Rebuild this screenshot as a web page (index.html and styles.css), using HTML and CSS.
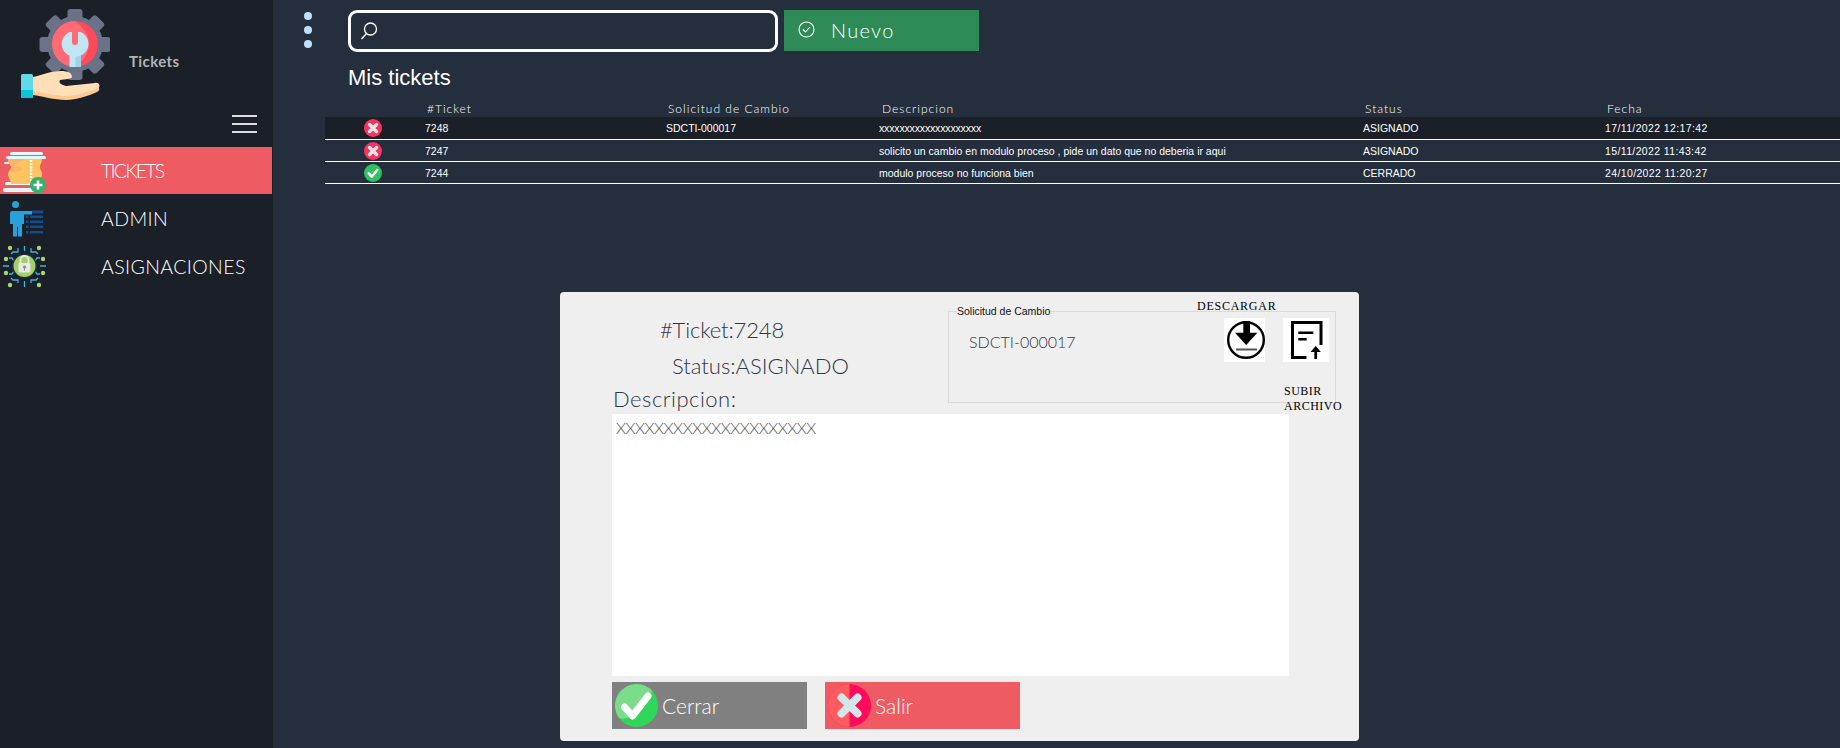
FILE: index.html
```html
<!DOCTYPE html>
<html lang="es">
<head>
<meta charset="utf-8">
<title>Tickets</title>
<link rel="stylesheet" href="styles.css">
</head>
<body>
<div class="app">
  <aside class="sidebar">
    <div class="brand">
      <svg class="logo" width="92" height="108" viewBox="18 0 92 108">
        <g fill="#6b7186">
          <circle cx="75" cy="44" r="28"/>
          <rect x="67.500" y="9" width="15" height="71" rx="3"/>
          <rect x="67.500" y="9" width="15" height="71" rx="3" transform="rotate(45 75 44.500)"/>
          <rect x="67.500" y="9" width="15" height="71" rx="3" transform="rotate(90 75 44.500)"/>
          <rect x="67.500" y="9" width="15" height="71" rx="3" transform="rotate(135 75 44.500)"/>
        </g>
        <circle cx="75" cy="44" r="23" fill="#ff4a5c"/>
        <path d="M75 21a23 23 0 0 0 0 46c8-6 14-14 14-23s-6-17-14-23z" fill="#ff6b75"/>
        <path d="M69.500 67V55.500C64.500 53.500 61.800 49 61.800 44C61.800 38.500 65 34 70 32L72 32V42A3 3 0 0 0 78 42V32L80.500 32C85.500 34 88.500 38.500 88.500 44C88.500 49 85.500 53.500 81 55.500V67Z" fill="#bfe6f2"/>
        <path d="M75.500 67H81V55.500L75.500 57z" fill="#9fd3e6"/>
        <path d="M33 77c9-2 18-6 28-6 7 0 11 2 11 6 0 2-7 2-12 3-2 3 2 5 6 6l29-3c4-1 6 3 3 6-9 4-22 10-32 10-12 0-24-4-33-5z" fill="#ffdfb8"/>
        <path d="M33 91c9 1 21 5 33 5 10 0 24-5 33-8 1 1 0 3-2 4-9 4-21 8-31 8-12 0-24-4-33-5z" fill="#fdc98e"/>
        <rect x="21" y="74" width="12" height="24" rx="1.500" fill="#62d9ea"/>
        <path d="M21 90h12v6.500a1.500 1.500 0 0 1-1.500 1.500h-9a1.500 1.500 0 0 1-1.500-1.500z" fill="#0cc4dc"/>
      </svg>
      <span class="brand-name">Tickets</span>
    </div>
    <div class="burger-row">
      <div class="burger"><i></i><i></i><i></i></div>
    </div>
    <nav class="nav">
      <a class="nav-item active">
        <svg class="nav-icon" width="48" height="47" viewBox="0 147 48 47">
          <g fill="#e2f8fd">
            <rect x="10" y="152" width="33" height="3" rx="1.500"/>
            <rect x="6" y="156" width="40" height="3" rx="1.500"/>
            <rect x="4" y="162" width="10" height="2" rx="1"/>
            <rect x="5" y="182" width="34" height="3" rx="1.500"/>
            <rect x="3" y="188" width="36" height="4" rx="2"/>
          </g>
          <path d="M8 159h34c0 4-2 5-2 8s2 4 2 7-2 5-2 10H11c0-4-3-6-3-10 0-3 3-4 3-7s-3-4-3-8z" fill="#fdc45f"/>
          <path d="M8 159h16c-2 3-8 3-10 6 3 2 8 1 9 4-2 3-8 3-12 3 0-2 0-3 0-5s-3-4-3-8z" fill="#fbb56b"/>
          <path d="M31 160v24" stroke="#fff" stroke-width="2.500" stroke-dasharray="2 1.200"/>
          <circle cx="38" cy="185" r="8" fill="#30b36f"/>
          <path d="M38 180.500v9M33.500 185h9" stroke="#fff" stroke-width="2.600"/>
        </svg>
        <span class="label-tickets">TICKETS</span>
      </a>
      <a class="nav-item">
        <svg class="nav-icon" width="48" height="48" viewBox="0 195 48 48">
          <path d="M10 214a2 2 0 0 1 2-2h20v3.500H24V225h-2v12.500h-4V228h-1v9.500h-4V225h-3z" fill="#2a9fde"/>
          <circle cx="15.500" cy="205.500" r="3.500" fill="#2a9fde"/>
          <g fill="#0f4f8f">
            <rect x="32" y="211.500" width="11" height="3"/>
            <rect x="30" y="216.500" width="13" height="2.500"/>
            <rect x="30" y="221.500" width="13" height="2.500"/>
            <rect x="30" y="226.500" width="13" height="2.500"/>
            <rect x="30" y="232" width="13" height="2.500"/>
            <rect x="26" y="216.500" width="2.500" height="2.500"/>
            <rect x="26" y="221.500" width="2.500" height="2.500"/>
            <rect x="26" y="226.500" width="2.500" height="2.500"/>
            <rect x="26" y="232" width="2.500" height="2.500"/>
          </g>
        </svg>
        <span>ADMIN</span>
      </a>
      <a class="nav-item">
        <svg class="nav-icon" width="48" height="48" viewBox="0 243 48 48">
          <g fill="none" stroke="#3fb2e0" stroke-width="1.300">
            <path d="M24.500 247v5M18 249v4h-5l-2 2M31 249v4h5l2 2M3 267h6M40 267h6M9 259h3l2 3M40 259h-3l-2 3M9 275h3l2-3M40 275h-3l-2-3M24.500 282v6M18 284v-3h-5l-2-2M31 284v-3h5l2-2"/>
          </g>
          <g fill="#a8d66c">
            <circle cx="10" cy="249" r="2.200"/><circle cx="39" cy="249" r="2.200"/>
            <circle cx="6" cy="260" r="2.200"/><circle cx="43" cy="260" r="2.200"/>
            <circle cx="6" cy="274" r="2.200"/><circle cx="43" cy="274" r="2.200"/>
            <circle cx="10" cy="286" r="2.200"/><circle cx="39" cy="286" r="2.200"/>
          </g>
          <circle cx="24.500" cy="267" r="12.500" fill="#16323a"/>
          <circle cx="24.500" cy="267" r="11" fill="#a2d168"/>
          <path d="M20.500 264v-3a4 4 0 0 1 8 0v3" fill="none" stroke="#e6e6e6" stroke-width="1.800"/>
          <rect x="18.500" y="264" width="12" height="9.500" rx="1" fill="#e8e8e8"/>
          <circle cx="24.500" cy="268" r="1.500" fill="#8a8a8a"/>
          <rect x="24" y="268" width="1" height="3.500" fill="#8a8a8a"/>
        </svg>
        <span>ASIGNACIONES</span>
      </a>
    </nav>
  </aside>

  <main class="main">
    <div class="topbar">
      <div class="dots"><i></i><i></i><i></i></div>
      <div class="search">
        <svg width="18" height="18" viewBox="0 0 18 18" fill="none" stroke="#fff" stroke-width="1.300">
          <circle cx="10.500" cy="7" r="6"/>
          <path d="M6.500 11.500l-5 5.500"/>
        </svg>
      </div>
      <button class="btn-new">
        <svg width="17" height="17" viewBox="0 0 17 17" fill="none" stroke="#fff" stroke-width="1.100">
          <circle cx="8.500" cy="8.500" r="7.500"/>
          <path d="M5 8.500l2.500 2.500 4.500-5"/>
        </svg>
        <span>Nuevo</span>
      </button>
    </div>
    <h1 class="title">Mis tickets</h1>
    <table class="grid">
      <colgroup>
        <col class="c1"><col class="c2"><col class="c3"><col class="c4"><col class="c5"><col class="c6">
      </colgroup>
      <thead>
        <tr><th></th><th>#Ticket</th><th>Solicitud de Cambio</th><th class="th-desc">Descripcion</th><th>Status</th><th>Fecha</th></tr>
      </thead>
      <tbody>
        <tr class="selected">
          <td class="state"><svg class="st" width="18" height="18" viewBox="0 0 18 18"><circle cx="9" cy="9" r="9" fill="#f9325f"/><path d="M5.500 5.500l7 7M12.500 5.500l-7 7" stroke="#e6e6e6" stroke-width="3.400" stroke-linecap="round"/></svg></td>
          <td>7248</td><td>SDCTI-000017</td><td class="xs">xxxxxxxxxxxxxxxxxxxx</td><td>ASIGNADO</td><td class="date">17/11/2022 12:17:42</td>
        </tr>
        <tr>
          <td class="state"><svg class="st" width="18" height="18" viewBox="0 0 18 18"><circle cx="9" cy="9" r="9" fill="#f9325f"/><path d="M5.500 5.500l7 7M12.500 5.500l-7 7" stroke="#e6e6e6" stroke-width="3.400" stroke-linecap="round"/></svg></td>
          <td>7247</td><td></td><td>solicito un cambio en modulo proceso , pide un dato que no deberia ir aqui</td><td>ASIGNADO</td><td class="date">15/11/2022 11:43:42</td>
        </tr>
        <tr>
          <td class="state"><svg class="st" width="18" height="18" viewBox="0 0 18 18"><circle cx="9" cy="9" r="9" fill="#33c062"/><path d="M4.800 9.500l3 3 5.500-6.500" fill="none" stroke="#fff" stroke-width="2.600" stroke-linecap="round" stroke-linejoin="round"/></svg></td>
          <td>7244</td><td></td><td>modulo proceso no funciona bien</td><td>CERRADO</td><td class="date">24/10/2022 11:20:27</td>
        </tr>
      </tbody>
    </table>
  </main>

  <section class="modal">
    <div class="modal-top">
      <div class="info">
        <div class="info-ticket">#Ticket:7248</div>
        <div class="info-status">Status:ASIGNADO</div>
        <div class="info-desc">Descripcion:</div>
      </div>
      <fieldset class="change">
        <legend>Solicitud de Cambio</legend>
        <div class="change-value">SDCTI-000017</div>
      </fieldset>
      <div class="tools">
        <div class="tool-download">
          <div class="tool-label">DESCARGAR</div>
          <div class="tool-box tb-a">
            <svg width="41" height="44" viewBox="0 0 41 44">
              <circle cx="22" cy="22" r="17.800" fill="none" stroke="#000" stroke-width="2.400"/>
              <path d="M19.300 3h6.700v11.700h7.300L22.200 27 11 14.700h8.300z" fill="#000"/>
              <rect x="12" y="30.500" width="21" height="2" fill="#555"/>
            </svg>
          </div>
        </div>
        <div class="tool-upload">
          <div class="tool-box tb-b">
            <svg width="46" height="44" viewBox="0 0 46 44" fill="none" stroke="#000" stroke-width="3">
              <path d="M38 27V4.500H9.500V39.500h14"/>
              <path d="M15.300 14.700H30.300M15.300 21.300H23.700" stroke-width="2.400"/>
              <path d="M32.700 41V32" stroke-width="2.800"/>
              <path d="M27.500 34l5.200-6 5.200 6z" fill="#000" stroke="none"/>
            </svg>
          </div>
          <div class="tool-label upload-label">SUBIR<br>ARCHIVO</div>
        </div>
      </div>
    </div>
    <div class="textbox">XXXXXXXXXXXXXXXXXXXXX</div>
    <div class="actions">
      <button class="act act-close">
        <svg width="43" height="43" viewBox="0 0 43 43">
          <circle cx="21.500" cy="21.500" r="21.500" fill="#2ed65a"/>
          <path d="M21.500 0A21.500 21.500 0 0 0 4 34C14 38 32 24 37 6 32 2 27 0 21.500 0z" fill="#7bdc8c"/>
          <path d="M9.500 23l8 9L33 12" fill="none" stroke="#fff" stroke-width="7" stroke-linecap="round" stroke-linejoin="round"/>
        </svg>
        <span>Cerrar</span>
      </button>
      <button class="act act-exit">
        <svg width="43" height="43" viewBox="0 0 43 43">
          <circle cx="21.500" cy="21.500" r="21.500" fill="#ff0a5c"/>
          <path d="M21.500 0a21.500 21.500 0 0 0 0 43z" fill="#ff5c62"/>
          <path d="M13.500 13.500l16 16M29.500 13.500l-16 16" stroke="#d3e6ea" stroke-width="8" stroke-linecap="round"/>
        </svg>
        <span>Salir</span>
      </button>
    </div>
  </section>
</div>
</body>
</html>
```
FILE: styles.css
```css
* { box-sizing: border-box; }
html, body { margin: 0; height: 100%; overflow: hidden; }
body { background: #242e3c; font-family: "Lato", "Liberation Sans", sans-serif; }

.app { display: flex; height: 748px; position: relative; }

/* Sidebar */
.sidebar { width: 273px; flex: none; background: #1a1f28; }
.brand { height: 108px; display: flex; align-items: flex-start; padding-left: 18px; }
.logo { display: block; flex: none; }
.brand-name { margin: 51px 0 0 19px; font-size: 15px; line-height: 20px; font-weight: 700; color: #b4b4b4; letter-spacing: .4px; }
.burger-row { height: 39px; display: flex; justify-content: flex-end; padding: 7px 16px 0 0; }
.burger { width: 25px; }
.burger i { display: block; height: 2px; background: #dcdcdc; margin-bottom: 6px; }
.nav { display: flex; flex-direction: column; }
.nav-item { display: flex; align-items: center; height: 48px; color: #fff; font-size: 19.500px; font-weight: 300; letter-spacing: .4px; }
.nav-item.active { height: 47px; background: #ee5b63; width: 272px; }
.nav-item span { margin-left: 53px; }
.nav-item .label-tickets { letter-spacing: -1.800px; }
.nav-icon { display: block; flex: none; }

/* Main */
.main { flex: 1; min-width: 0; }
.topbar { display: flex; align-items: flex-start; padding: 10px 0 0 31px; }
.dots { width: 8px; padding-top: 2px; margin-right: 36px; }
.dots i { display: block; width: 8px; height: 8px; border-radius: 50%; background: #bfe0fb; margin-bottom: 6px; }
.search { width: 430px; height: 42px; border: 3px solid #fff; border-radius: 9px; display: flex; align-items: center; padding-left: 9px; }
.btn-new { width: 195px; height: 41px; margin-left: 6px; background: #2e8b57; border: 0; padding: 0 0 2px 14px; display: flex; align-items: center; gap: 16px; color: #fff; font: 300 20px "Lato", sans-serif; letter-spacing: 1.300px; }
.title { margin: 12px 0 0 75px; font: 400 22px/23px "Liberation Sans", sans-serif; color: #fff; }

.grid { margin: 10px 0 0 52px; width: 1515px; table-layout: fixed; border-collapse: collapse; color: #fff; }
.c1 { width: 100px; } .c2 { width: 241px; } .c3 { width: 213px; } .c4 { width: 484px; } .c5 { width: 242px; } .c6 { width: 235px; }
.grid th { height: 18px; padding: 0 0 0 2px; text-align: left; font-weight: 300; font-size: 12px; letter-spacing: 1px; }
.grid .th-desc { padding-left: 3px; }
.grid td { height: 22px; padding: 1px 0 0; border-bottom: 1px solid #fff; font: 400 10.500px "Liberation Sans", sans-serif; white-space: nowrap; }
.grid .selected td { background: #1a1f28; }
.grid .date { letter-spacing: .37px; }
.grid .xs { letter-spacing: -.15px; }
.grid .state { padding-left: 39px; }
.st { display: block; }

/* Modal */
.modal { position: absolute; left: 560px; top: 292px; width: 799px; height: 449px; background: #efefef; border-radius: 4px; padding-left: 52px; color: #2f3745; }
.modal-top { display: flex; height: 122px; position: relative; }
.info { width: 336px; flex: none; font-weight: 300; font-size: 22px; line-height: 24px; }
.info-ticket { margin: 26px 0 0 48px; letter-spacing: -.15px; }
.info-status { margin: 12px 0 0 60px; }
.info-desc { margin: 9px 0 0 1px; letter-spacing: .5px; }
.change { margin: 13px 0 0; padding: 0 0 0 20px; width: 388px; height: 98px; border: 1px solid #dadada; min-width: 0; }
.change legend { margin-left: -12px; padding: 0; font: 400 10.500px/13px "Liberation Sans", sans-serif; color: #111; }
.change-value { margin-top: 14px; font-size: 16px; line-height: 20px; font-weight: 300; }

.tools { position: absolute; left: 585px; top: 0; width: 160px; height: 122px; }
.tool-label { font: 400 12px/15px "Liberation Serif", serif; color: #000; letter-spacing: .75px; }
.tool-download { position: absolute; left: 0; top: 7px; }
.tool-box { background: #fff; height: 44px; }
.tb-a { width: 41px; margin: 4px 0 0 27px; }
.tb-b { width: 46px; }
.tool-box svg { display: block; }
.tool-upload { position: absolute; left: 86px; top: 26px; }
.upload-label { margin: 22px 0 0 1px; letter-spacing: .5px; }

.textbox { width: 677px; height: 262px; background: #fff; padding: 4px 4px; font-size: 16px; line-height: 20px; font-weight: 300; letter-spacing: -.45px; color: #505050; }
.actions { display: flex; gap: 18px; margin-top: 6px; }
.act { width: 195px; height: 47px; border: 0; padding: 0 0 0 3px; display: flex; align-items: center; gap: 4px; color: #fff; font: 300 21px "Lato", sans-serif; }
.act-close { background: #808080; }
.act-exit { background: #ee5b63; }
.act svg { flex: none; }
```
